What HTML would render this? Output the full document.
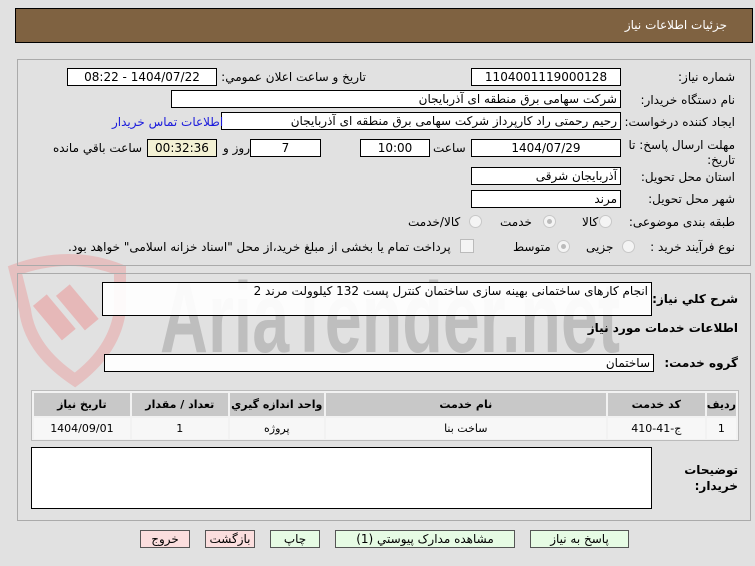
<!DOCTYPE html>
<html><head><meta charset="utf-8"><style>
body{margin:0;width:755px;height:566px;background:#e1e1e1;position:relative;overflow:hidden;font-family:"DejaVu Sans","Liberation Sans",sans-serif;font-size:12px;color:#000}
.a{position:absolute}
.l{position:absolute;direction:rtl;white-space:nowrap;font-size:12px}
.i{position:absolute;background:#fff;border:1px solid #000;box-sizing:border-box;direction:rtl;white-space:nowrap;font-size:12px;line-height:16px;padding:0 3px;overflow:hidden}
.c{text-align:center;padding:0}
.r{position:absolute;width:13px;height:13px;border-radius:50%;border:1px solid #c8c8c8;background:#f4f4f4;box-sizing:border-box}
.r.s::after{content:"";position:absolute;left:3px;top:3px;width:5px;height:5px;border-radius:50%;background:#bbb}
.b{position:absolute;top:530px;height:18px;border:1px solid #555;box-sizing:border-box;background:#e6fbe4;text-align:center;line-height:16px;font-size:12px;direction:rtl}
.p{background:#fbdede}
table{border-collapse:separate;border-spacing:2px}
td{font-size:11px;text-align:center;padding:0}
</style></head><body>
<svg class="a" style="left:0;top:250px" width="760" height="150">
<path d="M15 20 Q70 0 120 20 L120 60 Q115 100 75 130 Q30 100 25 60 Z" fill="none" stroke="#e6b8b8" stroke-width="12" opacity="0.8"/>
<rect x="45" y="45" width="18" height="45" fill="#e6b8b8" transform="rotate(-40 54 67)"/>
<rect x="68" y="35" width="18" height="45" fill="#e6b8b8" transform="rotate(-40 77 57)"/>
<text x="160" y="102" font-family="Liberation Sans Narrow,Liberation Sans,sans-serif" font-size="100" font-weight="bold" fill="#b0b0b0" opacity="0.7" textLength="460" lengthAdjust="spacingAndGlyphs">AriaTender.net</text>
</svg>
<div class="a" style="left:15px;top:8px;width:738px;height:35px;background:#7f6241;border:1px solid #000;box-sizing:border-box"></div>
<div class="l" style="right:28px;top:18px;color:#fff;font-size:12px">جزئیات اطلاعات نیاز</div>
<div class="a" style="left:17px;top:59px;width:734px;height:207px;border:1px solid #aaa;box-sizing:border-box"></div>
<div class="a" style="left:17px;top:273px;width:734px;height:248px;border:1px solid #aaa;box-sizing:border-box"></div>

<div class="l" style="right:20px;top:70px">شماره نیاز:</div>
<div class="i c" style="left:471px;top:68px;width:150px;height:18px">1104001119000128</div>
<div class="l" style="right:389px;top:70px">تاریخ و ساعت اعلان عمومي:</div>
<div class="i c" style="left:67px;top:68px;width:150px;height:18px">1404/07/22 - 08:22</div>

<div class="l" style="right:20px;top:93px">نام دستگاه خريدار:</div>
<div class="i" style="left:171px;top:90px;width:450px;height:18px">شرکت سهامی برق منطقه ای آذربایجان</div>

<div class="l" style="right:20px;top:115px">ایجاد کننده درخواست:</div>
<div class="i" style="left:221px;top:112px;width:400px;height:18px">رحیم  رحمتی راد کارپرداز شرکت سهامی برق منطقه ای آذربایجان</div>
<div class="l" style="left:112px;top:115px;color:#1a1adc">اطلاعات تماس خريدار</div>

<div class="l" style="right:20px;top:138px;line-height:15px">مهلت ارسال پاسخ: تا<br>تاریخ:</div>
<div class="i c" style="left:471px;top:139px;width:150px;height:18px">1404/07/29</div>
<div class="l" style="left:433px;top:141px">ساعت</div>
<div class="i c" style="left:360px;top:139px;width:70px;height:18px">10:00</div>
<div class="i c" style="left:250px;top:139px;width:71px;height:18px">7</div>
<div class="l" style="left:223px;top:141px">روز و</div>
<div class="i c" style="left:147px;top:139px;width:70px;height:18px;background:#f3f1d4">00:32:36</div>
<div class="l" style="left:53px;top:141px">ساعت باقي مانده</div>

<div class="l" style="right:20px;top:170px">استان محل تحویل:</div>
<div class="i" style="left:471px;top:167px;width:150px;height:18px">آذربایجان شرقی</div>
<div class="l" style="right:20px;top:192px">شهر محل تحویل:</div>
<div class="i" style="left:471px;top:190px;width:150px;height:18px">مرند</div>

<div class="l" style="right:20px;top:215px">طبقه بندی موضوعی:</div>
<div class="r" style="left:599px;top:215px"></div><div class="l" style="left:582px;top:215px">کالا</div>
<div class="r s" style="left:543px;top:215px"></div><div class="l" style="left:500px;top:215px">خدمت</div>
<div class="r" style="left:469px;top:215px"></div><div class="l" style="left:408px;top:215px">کالا/خدمت</div>

<div class="l" style="right:20px;top:240px">نوع فرآیند خرید :</div>
<div class="r" style="left:622px;top:240px"></div><div class="l" style="left:586px;top:240px">جزیی</div>
<div class="r s" style="left:557px;top:240px"></div><div class="l" style="left:513px;top:240px">متوسط</div>
<div class="a" style="left:460px;top:239px;width:12px;height:12px;border:1px solid #bbb;background:#f4f4f4"></div>
<div class="l" style="left:68px;top:240px">پرداخت تمام یا بخشی از مبلغ خرید،از محل "اسناد خزانه اسلامی" خواهد بود.</div>

<div class="l" style="right:17px;top:292px;font-weight:bold">شرح كلي نياز:</div>
<div class="i" style="left:102px;top:282px;width:550px;height:34px;background:rgba(255,255,255,0.92)">انجام کارهای ساختمانی بهینه سازی ساختمان کنترل پست 132 کیلوولت مرند 2</div>
<div class="l" style="right:17px;top:321px;font-weight:bold">اطلاعات خدمات مورد نياز</div>
<div class="l" style="right:17px;top:356px;font-weight:bold">گروه خدمت:</div>
<div class="i" style="left:104px;top:354px;width:550px;height:18px;background:rgba(255,255,255,0.92)">ساختمان</div>

<div class="a" style="left:31px;top:390px;width:708px;height:51px;border:1px solid #bbb;box-sizing:border-box;background:#f2f2f2"></div>
<table class="a" style="left:32px;top:391px;width:706px;direction:rtl">
<tr style="background:#c8c8c8;height:23px;font-weight:bold"><td style="width:28px">رديف</td><td style="width:97px">کد خدمت</td><td style="width:280px">نام خدمت</td><td style="width:94px">واحد اندازه گيري</td><td style="width:96px">تعداد / مقدار</td><td>تاريخ نياز</td></tr>
<tr style="background:#f7f7f7;height:21px"><td>1</td><td>ج-41-410</td><td>ساخت بنا</td><td>پروژه</td><td>1</td><td>1404/09/01</td></tr>
</table>

<div class="l" style="right:17px;top:462px;font-weight:bold;line-height:16px">توضيحات<br>خريدار:</div>
<div class="i" style="left:31px;top:447px;width:621px;height:62px"></div>

<div class="b" style="left:530px;width:99px">پاسخ به نياز</div>
<div class="b" style="left:335px;width:180px">مشاهده مدارک پيوستي (1)</div>
<div class="b" style="left:270px;width:50px">چاپ</div>
<div class="b p" style="left:205px;width:50px">بازگشت</div>
<div class="b p" style="left:140px;width:50px">خروج</div>
</body></html>
